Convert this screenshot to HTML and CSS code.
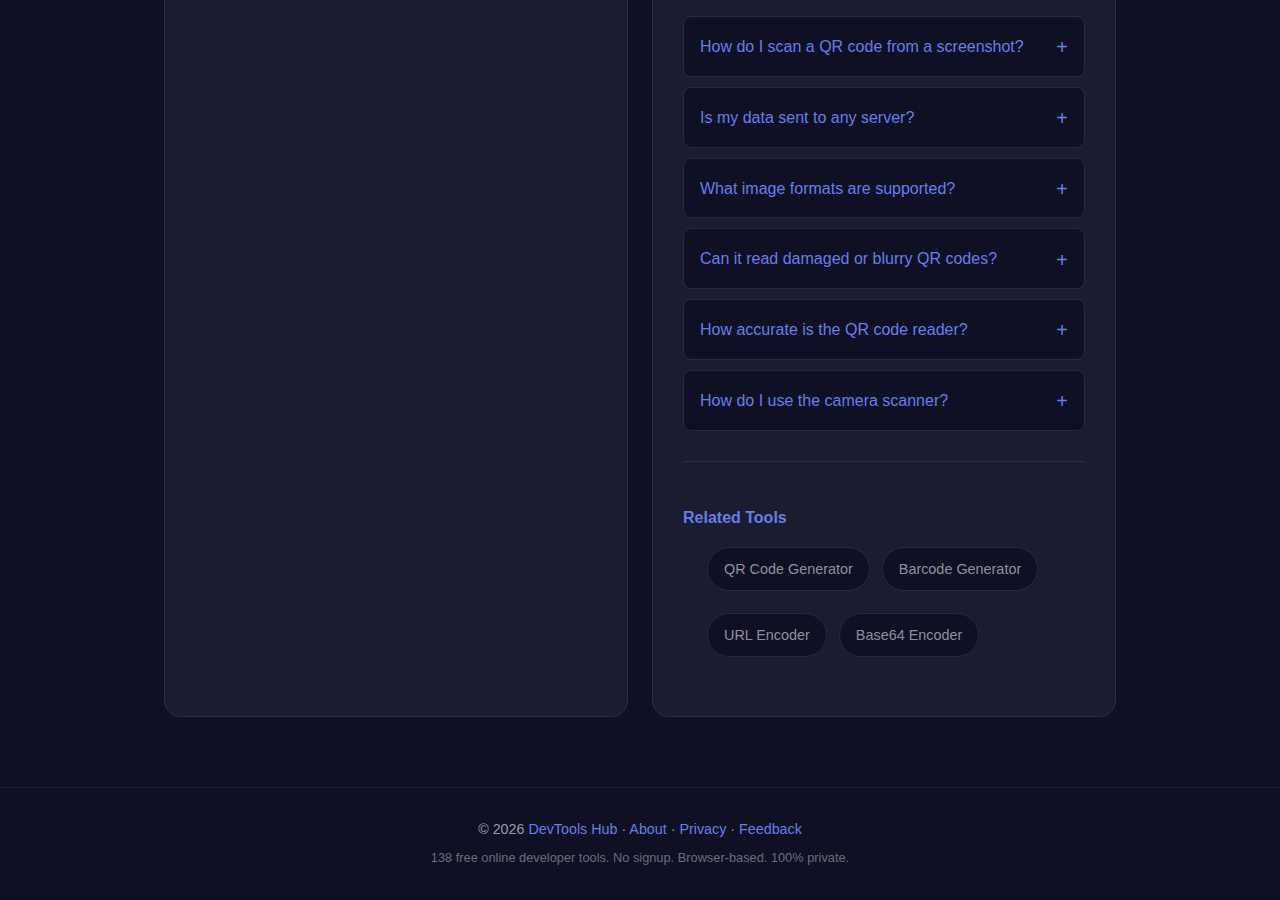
FILE: index.html
```html
<!DOCTYPE html>
<html lang="en">
<head>
    <meta charset="UTF-8">
    <meta name="viewport" content="width=device-width, initial-scale=1.0">
    <title>QR Code Reader - DevTools Hub</title>
    <link rel="stylesheet" href="styles.css">
</head>
<body>
    <main class="layout">
        <section class="card card-tool"></section>

        <section class="card card-info">
            <div class="faq">
                <div class="faq-item"><span>How do I scan a QR code from a screenshot?</span><span class="faq-plus">+</span></div>
                <div class="faq-item"><span>Is my data sent to any server?</span><span class="faq-plus">+</span></div>
                <div class="faq-item"><span>What image formats are supported?</span><span class="faq-plus">+</span></div>
                <div class="faq-item"><span>Can it read damaged or blurry QR codes?</span><span class="faq-plus">+</span></div>
                <div class="faq-item"><span>How accurate is the QR code reader?</span><span class="faq-plus">+</span></div>
                <div class="faq-item"><span>How do I use the camera scanner?</span><span class="faq-plus">+</span></div>
            </div>

            <hr class="divider">

            <h3 class="related-title">Related Tools</h3>
            <ul class="related-list">
                <li><a href="#" class="chip">QR Code Generator</a></li>
                <li><a href="#" class="chip">Barcode Generator</a></li>
                <li><a href="#" class="chip">URL Encoder</a></li>
                <li><a href="#" class="chip">Base64 Encoder</a></li>
            </ul>
        </section>
    </main>

    <footer class="footer">
        <p class="footer-links">© 2026 <a href="#">DevTools Hub</a> · <a href="#">About</a> · <a href="#">Privacy</a> · <a href="#">Feedback</a></p>
        <p class="footer-note">138 free online developer tools. No signup. Browser-based. 100% private.</p>
    </footer>
</body>
</html>
```

FILE: styles.css
```css
body {
    font-family: "Liberation Sans", Arial, sans-serif;
    background-color: #0f1024;
    color: #9a9aa8;
    margin: 0;
    padding: 0;
}

.layout {
    width: 952px;
    margin: -15px auto 0;
    display: grid;
    grid-template-columns: 1fr 1fr;
    gap: 24px;
}

.card {
    background: #1b1c2f;
    border: 1px solid #2b2c4c;
    border-radius: 16px;
    padding: 30px;
}

.faq {
    display: flex;
    flex-direction: column;
    gap: 10px;
}

.faq-item {
    display: flex;
    justify-content: space-between;
    align-items: center;
    background: #0f1024;
    border: 1px solid #25264a;
    border-radius: 8px;
    padding: 21px 16px 19px;
    font-size: 16px;
    line-height: 18.75px;
    color: #667eea;
}

.faq-plus {
    font-size: 20px;
    line-height: 18px;
}

.divider {
    border: none;
    border-top: 1px solid #2b2c4c;
    margin: 30px 0 0;
}

.related-title {
    color: #667eea;
    font-size: 16px;
    line-height: 18px;
    margin: 47px 0 20px;
}

.related-list {
    list-style: none;
    margin: 0 0 29px;
    padding: 0 0 0 24px;
    display: flex;
    flex-wrap: wrap;
    gap: 22px 12px;
}

.chip {
    display: block;
    padding: 13px 16px;
    font-size: 14.4px;
    line-height: 16px;
    color: #8f8f9c;
    text-decoration: none;
    background: #0f1024;
    border: 1px solid #25264a;
    border-radius: 22px;
}

.footer {
    margin-top: 70px;
    border-top: 1px solid #1e1f3a;
    padding: 31px 0 24px;
    text-align: center;
}

.footer p {
    margin: 0;
}

.footer-links {
    font-size: 14.3px;
    line-height: 20px;
    color: #9a9aa8;
}

.footer-links a {
    color: #667eea;
    text-decoration: none;
}

.footer-note {
    margin-top: 10px !important;
    font-size: 12.8px;
    line-height: 18px;
    color: #6c6c7a;
}
```
